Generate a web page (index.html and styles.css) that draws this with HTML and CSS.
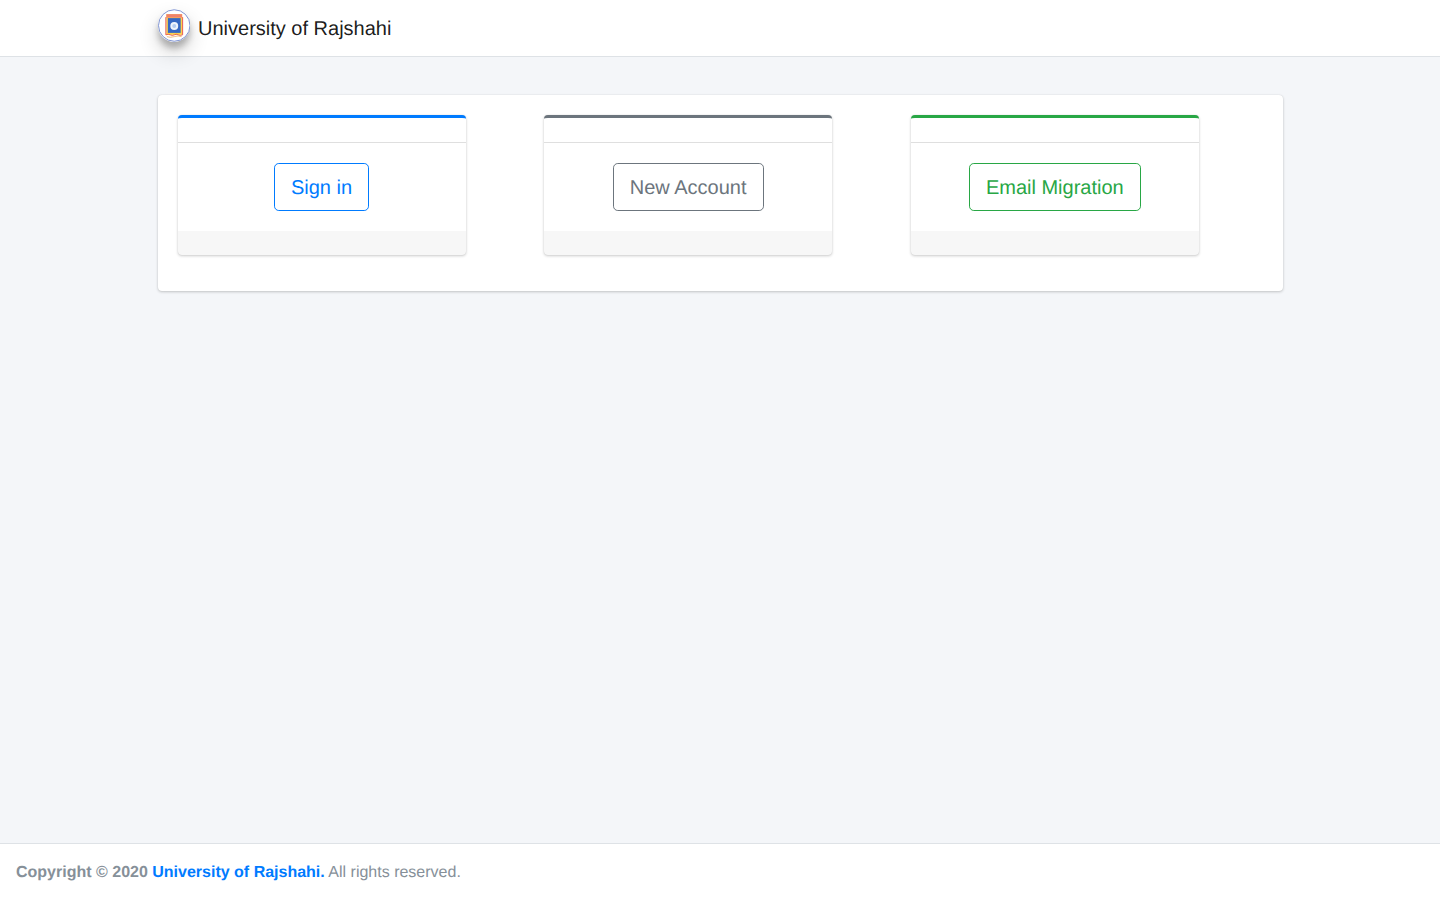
FILE: index.html
```html
<!DOCTYPE html>
<html lang="en">
<head>
<meta charset="utf-8">
<title>University of Rajshahi</title>
<link rel="stylesheet" href="styles.css">
</head>
<body>
<div class="wrapper">
  <nav class="navbar">
    <div class="container nav-inner">
      <a class="brand" href="#">
        <span class="brand-logo">
          <svg width="32.500" height="33" viewBox="0 0 33 33" aria-hidden="true">
            <circle cx="16.5" cy="16.5" r="16" fill="#fff" stroke="#6f86cc" stroke-width="0.900"/>
            <rect x="8.500" y="5" width="16" height="21" fill="#fbd24c"/>
            <rect x="8.500" y="5" width="16" height="3.500" fill="#f0826c"/>
            <rect x="7.500" y="8" width="1" height="18" fill="#e8564a"/>
            <rect x="24.500" y="8" width="1" height="18" fill="#e8564a"/>
            <rect x="10" y="9" width="13" height="15" fill="#3568c4"/>
            <circle cx="16.5" cy="17" r="4" fill="#eef3fc"/>
            <circle cx="16.5" cy="17" r="2" fill="#b4ccf0"/>
            <path d="M8 26 Q10.500 24.800 12.500 26 T16.500 26 T20.500 26 T25 26" fill="none" stroke="#e8564a" stroke-width="0.900"/>
            <path d="M9 27.800 Q12.500 29.200 16.500 27.800 T24 27.800" fill="none" stroke="#e9a24a" stroke-width="0.700"/>
          </svg>
        </span>
        <span class="brand-text">University of Rajshahi</span>
      </a>
    </div>
  </nav>
  <main class="content">
    <div class="container">
      <section class="card outer">
        <div class="outer-body">
          <div class="choices">
            <div class="card choice choice-primary">
              <div class="choice-header"></div>
              <div class="choice-body"><a class="btn btn-primary" href="#">Sign in</a></div>
              <div class="choice-footer"></div>
            </div>
            <div class="card choice choice-secondary">
              <div class="choice-header"></div>
              <div class="choice-body"><a class="btn btn-secondary" href="#">New Account</a></div>
              <div class="choice-footer"></div>
            </div>
            <div class="card choice choice-success">
              <div class="choice-header"></div>
              <div class="choice-body"><a class="btn btn-success" href="#">Email Migration</a></div>
              <div class="choice-footer"></div>
            </div>
          </div>
        </div>
      </section>
    </div>
  </main>
  <footer class="footer">
    <strong>Copyright © 2020 <a href="#">University of Rajshahi.</a></strong> All rights reserved.
  </footer>
</div>
</body>
</html>
```
FILE: styles.css
```css
* {
  box-sizing: border-box;
}

html, body {
  margin: 0;
  padding: 0;
}

body {
  font-family: "Liberation Sans", Arial, sans-serif;
  font-size: 16px;
  line-height: 1.5;
  color: #212529;
  background: #f4f6f9;
  text-rendering: geometricPrecision;
  -webkit-font-smoothing: antialiased;
}

a {
  text-decoration: none;
}

.wrapper {
  min-height: 100vh;
  display: flex;
  flex-direction: column;
}

.container {
  width: 1140px;
  margin: 0 auto;
  padding: 0 7.5px;
}

.navbar {
  height: 57px;
  background: #fff;
  border-bottom: 1px solid #dee2e6;
}

.nav-inner {
  height: 56px;
  display: flex;
  align-items: center;
}

.brand {
  display: flex;
  align-items: center;
  color: rgba(0, 0, 0, 0.9);
}

.brand-logo {
  display: block;
  width: 32.5px;
  height: 33px;
  margin-top: -6px;
  border-radius: 50%;
  box-shadow: 0 10px 20px rgba(0, 0, 0, 0.19), 0 6px 6px rgba(0, 0, 0, 0.23);
}

.brand-logo svg {
  display: block;
}

.brand-text {
  margin-left: 8px;
  padding-top: 2px;
  font-size: 20px;
  line-height: 30px;
}

.content {
  flex: 1;
  padding-top: 38px;
}

.card {
  background: #fff;
  border-radius: 4px;
  box-shadow: 0 0 1px rgba(0, 0, 0, 0.125), 0 1px 3px rgba(0, 0, 0, 0.2);
}

.outer-body {
  padding: 20px 20px 36px;
}

.choices {
  display: grid;
  grid-template-columns: repeat(3, 288px);
  column-gap: 78.67px;
}

.choice {
  overflow: hidden;
  border-top: 3px solid;
}

.choice-primary {
  border-top-color: #007bff;
}

.choice-secondary {
  border-top-color: #6c757d;
}

.choice-success {
  border-top-color: #28a745;
}

.choice-header {
  height: 25px;
  border-bottom: 1px solid rgba(0, 0, 0, 0.125);
}

.choice-body {
  padding: 20px;
  display: flex;
  justify-content: center;
}

.choice-footer {
  height: 24px;
  background: rgba(0, 0, 0, 0.03);
}

.btn {
  display: block;
  padding: 9px 16px 7px;
  font-size: 20px;
  line-height: 30px;
  border: 1px solid;
  border-radius: 4.8px;
}

.btn-primary {
  color: #007bff;
  border-color: #007bff;
}

.btn-secondary {
  color: #6c757d;
  border-color: #6c757d;
}

.btn-success {
  color: #28a745;
  border-color: #28a745;
}

.footer {
  height: 57px;
  padding: 17px 16px 15px;
  background: #fff;
  border-top: 1px solid #dee2e6;
  color: #869099;
}

.footer a {
  color: #007bff;
}
```
